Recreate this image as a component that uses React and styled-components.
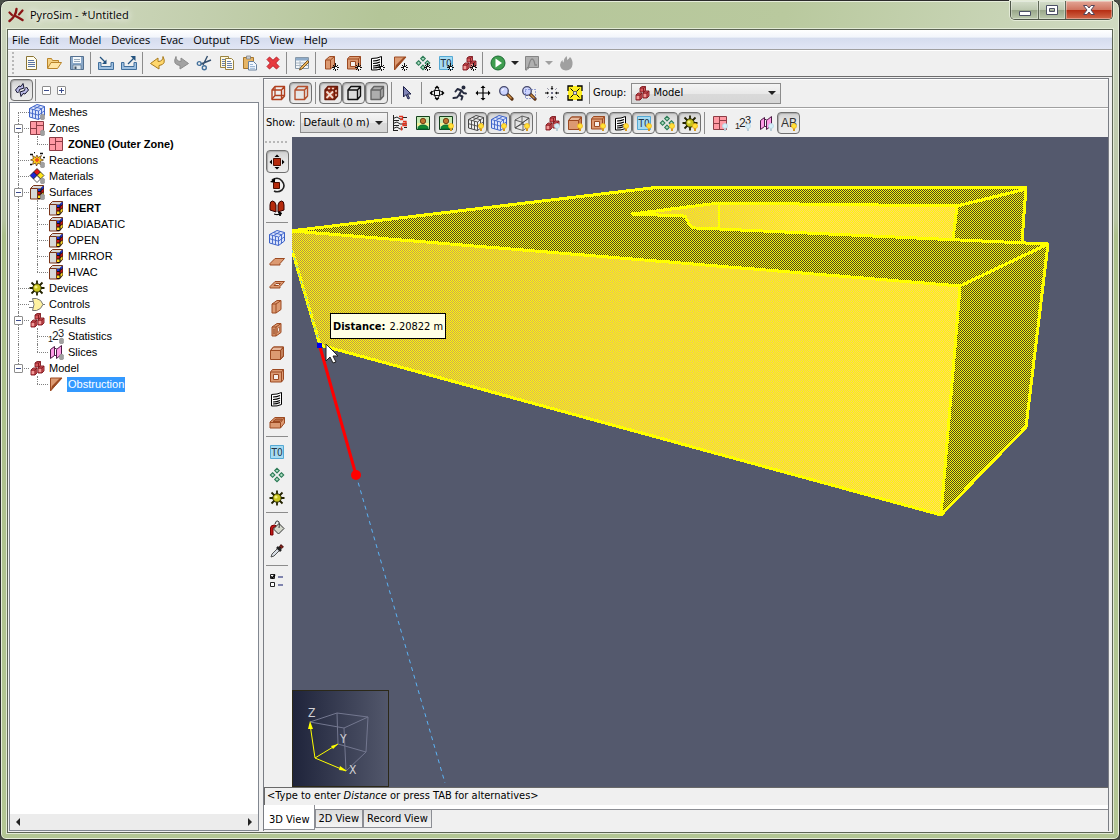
import { useState } from "react"
import styled, { createGlobalStyle } from "styled-components"

const GlobalStyle = createGlobalStyle`
  *, *::before, *::after { box-sizing: border-box; }
  body {
    margin: 0;
    background: #4a4f48;
    color: #000;
    font: 11px/14px "DejaVu Sans Condensed", "DejaVu Sans", sans-serif;
  }
  button, select { font: inherit; color: inherit; }
  ul { list-style: none; margin: 0; padding: 0; }
`

/* ---------- icons ---------- */

const BR = "#9c4a22"
const OR = "#dc9a72"

const Star = () => (
  <g stroke="#111" strokeWidth="1" shapeRendering="crispEdges">
    <path d="M12.500 8v8M8.500 12.500h8" />
    <path d="M10 10l5 5M15 10l-5 5" />
    <path d="M12 12h1v1h-1z" fill="#fff" stroke="#fff" />
  </g>
)

const Bulb = ({ off }) => (
  <g>
    <circle cx="13" cy="11" r="2.500" fill={off ? "#d5eef8" : "#ffe23a"} stroke={off ? "#b5d5e5" : "#f3b51c"} strokeWidth=".8" />
    <path d="M12 13.500h2v2.500h-2z" fill={off ? "#b9cdd8" : "#d99a20"} />
  </g>
)

const Pin = () => <path d="M11.500 11q2-2 4 0v4q-2 2-4 0z" fill="#a0a0a0" stroke="#8a8a8a" strokeWidth=".5" />

const Cube = ({ fill = OR, stroke = BR }) => (
  <g stroke={stroke} strokeLinejoin="round">
    <path d="M1.500 5.500l3-3.500h10v9l-3 3.500h-10z" fill={fill} />
    <path d="M1.500 5.500l3-3.500h10l-3 3.500z" fill="#fff" fillOpacity=".3" />
    <path d="M11.500 5.500l3-3.500v9l-3 3.500z" fill="#5a2000" fillOpacity=".2" />
  </g>
)

const Grid = ({ c = "#3d62c8", fill = "#dbe4fb" }) => (
  <g stroke={c} fill="none">
    <path d="M.500 4.500l7.500-4 7.500 2v8.500l-6 4.500-9-2.500z" fill={fill} />
    <path d="M.500 4.500l9 2.500 6-4.500M9.500 7v8.500M3.500 5.300v8.500M6.500 6.200v8.500M.500 8.700l9 2.500 6-4.500M12.500 5v8.500M4.300 2.500l8.500 2.300M11.500 1.500L4.500 5.600" strokeWidth=".9" />
  </g>
)

const Wire = ({ c = "#444" }) => (
  <path d="M1 5l7-4 7 2v8l-6 4.500L1 13zM1 5l8 2.500L15 3M9 7.500v8M1 13L15 3M8 1v8l7 2M8 9l-7 4" fill="none" stroke={c} strokeWidth=".8" />
)

const Blocks = () => (
  <g fill="#d8585c" stroke="#7d1a20" strokeWidth=".9">
    <path d="M6 3l2-1.500h3.500v4l-2 1.500H6z" />
    <path d="M9 8l2-2h4v5l-2 2H9z" />
    <path d="M2 10l2-2h4v5l-2 2H2z" />
    <path d="M6 3h3.500v4M9.500 3l2-1.500M9 8h4v5M13 8l2-2M2 10h4v5M6 10l2-2" fill="none" />
    <path d="M2.700 11h2.500v3H2.700zM9.700 9h2.500v3H9.700z" fill="#f09a98" stroke="none" />
  </g>
)

const Zone = () => (
  <g stroke="#8d3c45" fill="#ff9aa4">
    <path d="M1.500 1.500h13v13h-13zM1.500 8.500h6M7.500 1.500v13M7.500 5.500h7" />
  </g>
)

const Sheet = () => (
  <g stroke="#000" fill="#fff">
    <path d="M2.500 3.500q6 0 10-2v12q-4 2-10 1.500z" />
    <path d="M4 6q4 0 7-1.500M4 8.500q4 0 7-1.500M4 11q4 0 7-1.500M4 13q4 0 7-1.500" strokeWidth="1.200" fill="none" />
  </g>
)

const Hole = () => (
  <g stroke={BR} fill={OR}>
    <path d="M1.500 4l2-2.500h11v10l-2 2.500h-11z" />
    <path d="M1.500 4h11v10M12.500 4l2-2.500" fill="none" />
    <path d="M4.500 6.500h5v5h-5z" fill="#f5f0ec" />
  </g>
)

const Thermo = () => (
  <g>
    <path d="M1.500 1.500h13v13h-13z" fill="#a6dbf2" stroke="#55a9d4" />
    <text x="8" y="12" fontSize="10" textAnchor="middle" fontFamily="DejaVu Sans Condensed, DejaVu Sans, sans-serif" fill="#234">T0</text>
  </g>
)

const Cluster = () => (
  <g fill="#a9dcbf" stroke="#2c7a56" strokeWidth="1.100">
    <path d="M8 1.300l2.300 2.300L8 5.900 5.700 3.600zM3.600 5.700l2.300 2.300-2.300 2.300L1.300 8zM12.400 5.700l2.300 2.300-2.300 2.300L10.100 8zM8 10.100l2.300 2.300L8 14.700l-2.300-2.300z" />
  </g>
)

const Gear = () => (
  <g stroke="#222200" strokeWidth="1.800">
    <path d="M8 .500v15M.500 8h15M2.500 2.500l11 11M13.500 2.500l-11 11" />
    <circle cx="8" cy="8" r="4.200" fill="#c9c51d" strokeWidth="1" />
    <circle cx="7" cy="7" r="1.600" fill="#f6f27c" stroke="none" />
  </g>
)

const Surface = () => (
  <g>
    <path d="M1.500 4.500l3-3h10v10l-3 3.500h-10z" fill="#d8d8d8" stroke="#7a3418" />
    <path d="M8.500 4.500h3l3-3v10l-3 3.500h-3z" fill="#111" />
    <path d="M9 5h2.500v2H9zM12.500 3.500l2-1.500v2l-2 2z" fill="#1c2fd8" />
    <path d="M9 8h2.500v2.500H9zM12.500 6.500l2-1.500v2.500l-2 2z" fill="#c81414" />
    <path d="M9 11.500h2.500V14H9zM12.500 10l2-1.500v2.500l-2 2z" fill="#ffd820" />
    <path d="M1.500 4.500h7v10.500" fill="none" stroke="#7a3418" />
  </g>
)

const Digits = () => (
  <g fontFamily="Liberation Sans, sans-serif" fill="#222">
    <text x="0" y="14" fontSize="9">1</text>
    <text x="4" y="12" fontSize="12">2</text>
    <text x="10" y="9" fontSize="11">3</text>
  </g>
)

const Slices = () => (
  <g fill="#ff9be6" stroke="#4a1a44">
    <path d="M2.500 5.500l4-3v9l-4 3z" />
    <path d="M8.500 5.500l5-4v9l-5 4z" />
    <path d="M6.500 4.500h2M6.500 11.500h2" />
  </g>
)

const Wedge = () => (
  <g>
    <path d="M2.500 2v13L14 2z" fill={OR} stroke={BR} />
    <path d="M2.500 15L4 10l8-8h2z" fill={BR} />
  </g>
)

const Person = () => (
  <g>
    <path d="M1.500 1.500h13v13h-13z" fill="#c5eab4" stroke="#14401c" />
    <path d="M2 8h12v3H2z" fill="#f0ee9a" />
    <path d="M3 14q0-4 5-4t5 4z" fill="#118a2d" stroke="#063" />
    <circle cx="8" cy="6" r="2.700" fill="#c0722e" stroke="#5a2c08" strokeWidth=".8" />
  </g>
)

const Hydrant = () => (
  <g strokeWidth="1" fill="none">
    <path d="M1.500 0v16" stroke="#222" />
    <path d="M1 3.500l4-1.500 3 2h3M1 8.500l4-1.500 3 2h7M1 13.500l4-1.500 3 2h3M1 5.500h6M1 10.500h6M1 15.500h5M11 2.500h4M12 12.500h3" stroke="#222" />
    <path d="M7 1.500h3.500v3H8M11 6.500h3v2h-3v2h4M9.500 11.500v4" stroke="#e0301c" strokeWidth="1.300" />
  </g>
)

const Magnifier = () => (
  <g>
    <path d="M9 9l5 5" stroke="#5a3212" strokeWidth="3.200" strokeLinecap="round" />
    <path d="M9.500 9.500l4 4" stroke="#d49248" strokeWidth="1.300" />
    <circle cx="6" cy="6" r="4.300" fill="#ccd4ff" stroke="#45486b" strokeWidth="1.300" />
    <path d="M4 6q0-2 2-2" stroke="#fff" fill="none" />
  </g>
)

const Box3 = ({ c, fill }) => (
  <path d="M2 5l3-3.500h9.500V11l-3 3.500H2zM2 5h9.500v9.500M11.500 5l3-3.500" fill={fill || "none"} stroke={c} strokeWidth="1.400" strokeLinejoin="round" />
)

const FourWay = () => (
  <path d="M8 .500L10.500 3h-5zM8 15.500l2.500-2.500h-5zM.500 8L3 5.500v5zM15.500 8L13 5.500v5z" fill="#000" />
)

const icons = {
  doc: <g><path d="M3.500 1.500h7l3 3v10h-10z" fill="#fffdf0" stroke="#8a7434" /><path d="M5 5.500h6M5 7.500h7M5 9.500h7M5 11.500h7" stroke="#5b74a4" /></g>,
  open: <g stroke="#b9842a"><path d="M1.500 13V3.500h4l1 2h6V8" fill="#f4d183" /><path d="M1.500 13.500L5 7.500h10.500l-4 6z" fill="#ffe5a5" /></g>,
  save: <g><path d="M1.500 1.500h13v13h-13z" fill="#8aa8c8" stroke="#55708f" /><path d="M4 2h8v6H4z" fill="#f5f9fc" /><path d="M5 4.500h6M5 6.500h6" stroke="#9ab" /><path d="M4 10h8v4.500H4z" fill="#dfe8ee" stroke="#607c98" strokeWidth=".8" /><path d="M5.500 11.500h2v2.500h-2z" fill="#456" /></g>,
  importIcon: <g><path d="M.500 7.500h2.500v4h10v-4h2.500v7H.500z" fill="#9dbfe0" stroke="#416f9c" /><path d="M2 2l5 5" stroke="#24537f" strokeWidth="1.300" /><path d="M8.500 9V4.500L4 9z" fill="#24537f" /></g>,
  exportIcon: <g><path d="M.500 7.500h2.500v4h10v-4h2.500v7H.500z" fill="#9dbfe0" stroke="#416f9c" /><path d="M7 9l6-6" stroke="#24537f" strokeWidth="1.300" /><path d="M14.500 1v5L9.500 1z" fill="#24537f" /></g>,
  undo: <path d="M13 1.500q4 8-4 9v3.500L.500 8.500 8 3v3.500q5 0 5-5z" fill="#ffd76c" stroke="#a87a1c" />,
  redo: <path d="M3 1.500q-4 8 4 9v3.500l8.500-5.500L8 3v3.500q-5 0-5-5z" fill="#a2a2a2" stroke="#8c8c8c" />,
  cut: <g stroke="#44719c" fill="none" strokeWidth="1.400"><path d="M11.500 1L7 10M15 5L5 9" stroke="#35506e" /><circle cx="3.200" cy="8.500" r="1.900" /><circle cx="8.300" cy="12.800" r="2" /></g>,
  copy: <g stroke="#9a8340"><path d="M1.500 1.500h8v11h-8z" fill="#fff8dc" /><path d="M6.500 3.500h6l2 2v9h-8z" fill="#fffdf3" /><path d="M8 6.500h4M8 8.500h5M8 10.500h5M8 12.500h5M3 4.500h3M3 6.500h3M3 8.500h3M3 10.500h3" stroke="#6a83ac" /></g>,
  paste: <g><path d="M1.500 2.500h10v11h-10z" fill="#e6b566" stroke="#a6762c" /><path d="M4.500 1h4v3h-4z" fill="#c8ced4" stroke="#777" strokeWidth=".7" /><path d="M6.500 6.500h5l3 3v5.500h-8z" fill="#f2f8ff" stroke="#68809c" /><path d="M8 9.500h3M8 11.500h5M8 13.300h5" stroke="#86a6cc" strokeWidth=".8" /></g>,
  del: <path d="M2 4.500L4.500 2 8 5.300 11.500 2 14 4.500 10.700 8 14 11.500 11.500 14 8 10.700 4.500 14 2 11.500 5.300 8z" fill="#e83a3f" stroke="#b8222a" />,
  edit: <g><path d="M1.500 2.500h13v11h-13z" fill="#f2f5f8" stroke="#8798a8" /><path d="M2 3h12v2.500H2z" fill="#8eabc9" /><path d="M2 8h12M2 10.500h12M6 6v7.500" stroke="#abb8c4" /><path d="M13.500 5.500l1.500 1.500-7 7-2.500 1 1-2.500z" fill="#e8b45c" stroke="#6d4b1c" strokeWidth=".9" /></g>,
  newSlab: <g><path d="M2.500 5l4-3.500h5v9l-4 3.500h-5z" fill={OR} stroke={BR} /><path d="M2.500 5h5v9M7.500 5l4-3.500" stroke={BR} fill="none" /><Star /></g>,
  newHole: <g><Hole /><Star /></g>,
  newVent: <g><Sheet /><Star /></g>,
  newWedge: <g><Wedge /><Star /></g>,
  newCluster: <g><Cluster /><Star /></g>,
  newThermo: <g><Thermo /><Star /></g>,
  newBlocks: <g><Blocks /><Star /></g>,
  run: <g><circle cx="8" cy="8" r="7" fill="#3f9e50" stroke="#1d6a34" /><path d="M5.500 3.500L12 8l-6.500 4.500z" fill="#fff" /></g>,
  chart: <g stroke="#858585"><path d="M1.500 1.500h13v11H3v2.500H1.500z" fill="#b0b0b0" /><path d="M4 14q2-10 4-10t3 6h2" fill="none" strokeWidth="1.300" /></g>,
  flame: <path d="M8.500 1q1 2 .500 4 2-1 3-3 3 3 2.500 7.500Q14 15 8 15.500 2.500 15 2 10q0-3 2.500-5 0 2 1 2.500Q6 3 8.500 1z" fill="#a0a0a0" />,
  wireBox: <g><Box3 c="#b0401f" /><path d="M5 2v8.500h9M5 10.500L2 14" stroke="#b0401f" strokeWidth="1.300" fill="none" /></g>,
  outlineBox: <Box3 c="#b5502e" />,
  texBox: <g><Box3 c="#6b1c0c" fill="#a33a22" /><path d="M3.500 6.500l6.500 6.500M10 6.500l-6.500 6.500" stroke="#f2dcd0" strokeWidth="1.800" /><path d="M5 3.500h2M9 3.500h2M13 5v2M13 9v2" stroke="#f2cfc0" strokeWidth="1.400" /></g>,
  blackBox: <Box3 c="#111" fill="#dcdcdc" />,
  greyBox: <Box3 c="#666" fill="#adadad" />,
  arrow: <path d="M4.500 1.500v10.500l2.500-2.500 2 4.500 1.500-.700-2-4.300h3.500z" fill="#8286b8" stroke="#1d2048" />,
  orbit: <g><FourWay /><ellipse cx="8" cy="8" rx="5.500" ry="2.500" fill="none" stroke="#000" /><ellipse cx="8" cy="8" rx="2.500" ry="5.500" fill="none" stroke="#000" /><path d="M6 6h4v4H6z" fill="#f0f0f0" /></g>,
  runner: <g fill="none" stroke="#252a3e" strokeWidth="2" strokeLinecap="round" strokeLinejoin="round"><circle cx="11.500" cy="2.500" r="1" /><path d="M9.500 5.500L7 10l3.500 1.500-1 3M7 10l-2 2.500-3.500.500M9.500 5.500L5.500 4 3.500 6.500M9.500 5.500L11.500 8l2.500.500" /></g>,
  pan: <g><path d="M8 2v12M2 8h12" stroke="#000" strokeWidth="1.200" /><FourWay /></g>,
  zoom: <Magnifier />,
  zoomBox: <g><Magnifier /><path d="M4.500 4.500h10v9h-10z" fill="none" stroke="#3c50b0" strokeDasharray="1 2" /></g>,
  center: <g stroke="#000" fill="none"><path d="M8 1v3M8 12v3M1 8h3M12 8h3M7 3l1 1.500L9 3M7 13l1-1.500L9 13M3 7l1.500 1L3 9M13 7l-1.500 1L13 9" /><path d="M7.500 7.500h1v1h-1z" stroke="#446" /><path d="M3.500 3.500l1 1M12.500 3.500l-1 1M3.500 12.500l1-1M12.500 12.500l-1-1" stroke="#446" /></g>,
  fit: <g><path d="M1 1h14v14H1z" fill="#ffef20" /><path d="M1 6V1h5M10 1h5v5M15 10v5h-5M6 15H1v-5" fill="none" stroke="#000" strokeWidth="1.300" /><path d="M3.500 3.500l3 3M12.500 3.500l-3 3M3.500 12.500l3-3M12.500 12.500l-3-3" stroke="#000" /><path d="M6.500 6.500h3v3h-3z" fill="#d5d5f0" stroke="#335" strokeWidth=".7" /></g>,
  blocks: <Blocks />,
  blocksOff: <g><Blocks /><Bulb off /></g>,
  hydrant: <Hydrant />,
  person: <Person />,
  personOn: <g><Person /><Bulb /></g>,
  gridBlackOn: <g><Grid c="#444" fill="#eee" /><Bulb /></g>,
  gridOn: <g><Grid /><Bulb /></g>,
  wireOn: <g><Wire /><Bulb /></g>,
  cubeOn: <g><Cube /><Bulb /></g>,
  holeOn: <g><Hole /><Bulb /></g>,
  ventOn: <g><Sheet /><Bulb /></g>,
  thermoOn: <g><Thermo /><Bulb /></g>,
  clusterOn: <g><Cluster /><Bulb /></g>,
  gearOn: <g><Gear /><Bulb /></g>,
  zoneOff: <g><Zone /><Bulb off /></g>,
  digitsOff: <g><Digits /><Bulb off /></g>,
  slicesOff: <g><Slices /><Bulb off /></g>,
  label: <g><text x="0" y="12" fontSize="12" fontFamily="Liberation Sans, sans-serif" fill="#333">AB</text><Bulb /></g>,
  move: <g><FourWay /><path d="M4.500 4.500h7v7h-7z" fill="#b52a0c" stroke="#4d0d00" /></g>,
  rotate: <g><path d="M3 3q6-4 10 1t0 9q-4 3-8 1" fill="none" stroke="#222" strokeWidth="1.600" /><path d="M1 5l5-4v5z" fill="#000" /><path d="M4.500 5.500h6v6h-6z" fill="#b52a0c" stroke="#4d0d00" /></g>,
  mirror: <g><path d="M1 5q0-4 2.500-4T7 5v7L1 10zM15 5q0-4-2.500-4T9 5v7l6-2z" fill="#b52a0c" stroke="#300" /><path d="M5 14q3 1.500 6 0M9.500 12l3 1-1.500 3z" stroke="#000" /></g>,
  mesh: <Grid />,
  slab: <path d="M1 10.500l5-5h9.500l-4.500 5v1.500H1z" fill={OR} stroke={BR} />,
  slabHole: <g stroke={BR}><path d="M1 10.500l5-5h9.500l-4.500 5v1.500H1z" fill={OR} /><path d="M5 9.500l2-2h4.500l-2 2z" fill="#f4f0ec" /></g>,
  wall: <g stroke={BR} fill={OR}><path d="M3 5l5-3.500h4v9L7 14H3zM3 5h4v9M7 5l5-3.500" /></g>,
  wallHole: <g stroke={BR} fill={OR}><path d="M3 5l5-3.500h4v9L7 14H3zM3 5h4v9M7 5l5-3.500" /><path d="M8.500 6.500l2-1.500v4l-2 1.500zM4.500 7h1v5h-1z" fill="#f4f0ec" strokeWidth=".7" /></g>,
  block: <Cube />,
  hole: <Hole />,
  vent: <Sheet />,
  room: <g stroke={BR} fill={OR}><path d="M1 8l5-4.500h9.500V9l-4 5H1z" /><path d="M4 7.500l3-2.500h6.500L11 7.500z" fill="#b86f48" /><path d="M1 8.500h10.500V14M11.500 8.500l4-5" fill="none" /></g>,
  thermo: <Thermo />,
  cluster: <Cluster />,
  gear: <Gear />,
  bucket: <g><path d="M1.500 15V8q0-3 4-3l2 1-3.500 2v7z" fill="#c01818" stroke="#700" /><path d="M4.500 9L10 3.500l5 5-5.500 5.500z" fill="#d4d8cc" stroke="#333" /><path d="M6 4q1-4 3-3t1 7" fill="none" stroke="#333" /></g>,
  picker: <g><path d="M2 14l1-3 6-6 2 2-6 6z" fill="#d6dce4" stroke="#444" strokeWidth=".9" /><path d="M8 4l4 4M10 6l3-3.500" stroke="#222" strokeWidth="2.600" /><path d="M12 1.500l2.500 2.500-2 1.500-2-2z" fill="#82231a" stroke="#300" strokeWidth=".7" /></g>,
  options: <g><path d="M1.500 1.500h4v4h-4zM1.500 9.500h4v4h-4z" fill="#fff" stroke="#222" /><path d="M2 3.500L3.500 5 6 1.500" fill="none" stroke="#000" strokeWidth="1.400" /><path d="M9 4h5M9 12h5" stroke="#5a6098" strokeWidth="1.600" /></g>,
  link: <g fill="#bcbce8" stroke="#151530"><path d="M1.500 8L5 4l2 .500L9 1.500l1 4.500-4.500 1.500L5 9.500 3.500 11z" /><path d="M14.500 8L11 12l-2-.500-2 3L6 10l4.500-1.500.500-2L12.500 5z" /></g>,
  treeMesh: <g><Grid /><Pin /></g>,
  treeZone: <g><Zone /><Pin /></g>,
  zone: <Zone />,
  reaction: <g><path d="M8 3l1 2.500 3.500-2-1.500 3 3.500 1.500-3.500 1.500 1.500 3.500-3.500-2L7.500 14l-1-3-3 1.500 1-3.500L1.500 8l3-1.500L3.500 3.500l3 2z" fill="#ffd01c" stroke="#3a1200" strokeWidth=".6" /><path d="M8 5.500l2.500 2.500L8 10.500 5.500 8z" fill="#f0501c" /><path d="M1 2.500h3M11 1.500h3M1 12.500h2M5 .500h1M14 5.500h2" stroke="#111" strokeWidth="1.500" /><Pin /></g>,
  material: <g stroke="#111" strokeWidth=".7"><path d="M8 .500l3.500 3.500L8 7.500 4.500 4z" fill="#e01818" /><path d="M4.500 4L8 7.500 4.500 11 1 7.500z" fill="#1c28d8" /><path d="M11.500 4L15 7.500 11.500 11 8 7.500z" fill="#ffe61c" /><path d="M8 7.500l3.500 3.500L8 14.500 4.500 11z" fill="#fff" /><Pin /></g>,
  treeSurface: <g><Surface /><Pin /></g>,
  surface: <Surface />,
  control: <g stroke="#777"><path d="M0 5.500h4M0 11.500h4M13 8.500h3" /><path d="M3.500 2.500h4q5 1 6.500 6-2 5-6.500 6h-4q3-6 0-12z" fill="#fff2a0" /></g>,
  stats: <g><Digits /><Pin /></g>,
  slices: <g><Slices /><Pin /></g>,
  wedge: <Wedge />,
  logo: <g stroke="#8a1414" fill="none" strokeLinecap="round"><path d="M8.500 2Q8 9 1.500 14" strokeWidth="2.400" /><path d="M7.500 9q3 1.500 7 4" strokeWidth="2.400" /><path d="M1.500 5.500l2.500 2.500" strokeWidth="2.200" /><path d="M14.500 3.500L11 7.500" strokeWidth="2.200" /></g>,
}

const Icon = ({ name, size = 16 }) => (
  <svg width={size} height={size} viewBox="0 0 16 16" aria-hidden="true">{icons[name]}</svg>
)

const Arrow = ({ off }) => (
  <svg width="8" height="4" viewBox="0 0 8 4" aria-hidden="true"><path d="M0 0h8L4 4z" fill={off ? "#a0a0a0" : "#222"} /></svg>
)

/* ---------- window frame ---------- */

const Frame = styled.div`
  display: flex;
  flex-direction: column;
  height: 100vh;
  min-height: 700px;
  padding: 0 6px 6px;
  border: 1px solid #2b2b2b;
  border-radius: 8px 8px 6px 6px;
  box-shadow: inset 0 0 0 1px #e6eddb;
  background:
    linear-gradient(100deg, #d3dbc3 0, #c3cfae 18%, #b4c598 34%, #b9c99e 70%, #d0dac2 100%) 0 0 / 100% 29px no-repeat,
    linear-gradient(#ccd5bf, #b8c4a4 26%, #acc08b 28%, #b3c694);
`

const TitleBar = styled.header`
  display: flex;
  align-items: center;
  flex: none;
  height: 28px;
  gap: 6px;
  padding-left: 1px;
  font: 11px/16px "Open Sans", "Noto Sans", sans-serif;
  h1 {
    flex: 1;
    margin: 0;
    font: inherit;
    text-shadow: 0 0 6px #fff, 0 0 10px #fff;
  }
`

const WindowButtons = styled.div`
  display: flex;
  align-self: flex-start;
  border: 1px solid #4d5548;
  border-top: 0;
  border-radius: 0 0 5px 5px;
  overflow: hidden;
  box-shadow: 0 0 0 1px #e4ebd8;
`

const WindowButton = styled.button`
  display: flex;
  align-items: center;
  justify-content: center;
  width: ${p => (p.$close ? 47 : 27)}px;
  height: 18px;
  padding: 0;
  border: 0;
  border-left: ${p => (p.$first ? 0 : 1)}px solid #5f6857;
  background: ${p => p.$close
    ? "linear-gradient(#e3a797, #d07560 48%, #b52c12 50%, #d2694a)"
    : "linear-gradient(#d5decb, #bdc9b0 48%, #98a689 50%, #bccaad)"};
  box-shadow: inset 0 0 0 1px rgba(255, 255, 255, 0.35);
`

const Client = styled.div`
  display: flex;
  flex-direction: column;
  flex: 1;
  min-height: 0;
  border: 1px solid #5c6455;
  outline: 1px solid #e2ead6;
  background: #f0f0f0;
`

const MenuBar = styled.nav`
  display: flex;
  flex: none;
  height: 20px;
  padding-left: 4px;
  gap: 10px;
  border-bottom: 1px solid #a0a0a0;
  background: linear-gradient(#fff, #f2f5fb 38%, #d5dcee 42%, #e1e6f5);
  button {
    padding: 0;
    border: 0;
    background: none;
    font: 11px/18px "Open Sans", "Noto Sans", sans-serif;
  }
`

/* ---------- toolbars ---------- */

const Bar = styled.div`
  display: flex;
  align-items: center;
  flex: none;
  height: ${p => p.$height}px;
  padding-left: ${p => p.$indent || 0}px;
  border-bottom: ${p => p.$line ? `1px solid ${p.$line}` : 0};
  box-shadow: inset 0 1px #fff;
`

const Grip = styled.span`
  flex: none;
  margin: ${p => (p.$flat ? "0 0 7px" : "0 5px 0 0")};
  width: ${p => (p.$flat ? 24 : 2)}px;
  height: ${p => (p.$flat ? 2 : 22)}px;
  background: ${p => p.$flat
    ? "repeating-linear-gradient(90deg, #b8b8b8 0 2px, transparent 2px 4px)"
    : "repeating-linear-gradient(#b8b8b8 0 2px, transparent 2px 4px)"};
`

const Tool = styled.button`
  display: flex;
  align-items: center;
  justify-content: center;
  flex: none;
  width: 23px;
  height: ${p => (p.$tall ? 23 : 22)}px;
  padding: 0;
  border: 1px solid transparent;
  border-radius: 4px;
  background: none;
  &[aria-pressed="true"] {
    border-color: #707070;
    background: linear-gradient(#cfcfcf, #e4e4e4 40%, #ececec);
    box-shadow: inset 1px 1px 1px #aaa;
  }
`

const DropTool = styled(Tool)`
  width: 11px;
`

const Rule = styled.span`
  flex: none;
  width: ${p => (p.$flat ? "22px" : "1px")};
  height: ${p => (p.$flat ? "1px" : "22px")};
  margin: ${p => (p.$flat ? "3px 0" : p.$tight ? "0 3px 0 2px" : "0 3px")};
  background: #8c8c8c;
`

const FieldLabel = styled.label`
  padding-right: 5px;
`

const Picker = styled.span`
  position: relative;
  display: flex;
  flex: none;
  width: ${p => p.$width}px;
  select {
    width: 100%;
    height: 21px;
    padding: 0 18px 0 ${p => (p.$icon ? 21 : 2)}px;
    border: 1px solid #8c8c8c;
    border-radius: 0;
    outline: 0;
    appearance: none;
    background: linear-gradient(#f4f4f4, #e9e9e9 50%, #dadada 52%, #d6d6d6);
  }
  > svg {
    position: absolute;
    top: 50%;
    right: 5px;
    transform: translateY(-50%);
    pointer-events: none;
  }
  > svg:nth-of-type(2) {
    right: auto;
    left: 3px;
  }
`

const ToolButton = ({ name, on, tall }) => {
  const [pressed, setPressed] = useState(on)
  return (
    <Tool
      type="button"
      aria-label={name}
      aria-pressed={on === undefined ? undefined : pressed}
      $tall={tall}
      onClick={() => on !== undefined && setPressed(!pressed)}
    >
      <Icon name={name} />
    </Tool>
  )
}

// "|" draws a separator, a leading "+" marks a pressed button
const ToolSet = ({ items, flat, tight }) => items.split(" ").map((item, i) => {
  if (item === "|") return <Rule key={i} $flat={flat} $tight={tight} />
  const on = item[0] === "+"
  return <ToolButton key={i} name={on ? item.slice(1) : item} on={on ? true : undefined} tall={flat} />
})

/* ---------- tree ---------- */

const Body = styled.div`
  display: flex;
  flex: 1;
  min-height: 0;
  gap: 4px;
  padding: 1px 3px 1px 1px;
`

const SidePane = styled.aside`
  display: flex;
  flex-direction: column;
  flex: none;
  width: 250px;
`

const Fold = styled.button`
  display: flex;
  align-items: center;
  justify-content: center;
  flex: none;
  width: 9px;
  height: 9px;
  padding: 0;
  border: 1px solid #8d8d8d;
  border-radius: 1px;
  background: #fff;
`

const FoldAll = styled.span`
  display: flex;
  gap: 6px;
  padding-left: 3px;
`

const TreeBox = styled.div`
  display: flex;
  flex-direction: column;
  flex: 1;
  border: 1px solid #828790;
  background: #fff;
  font: 11px/15px "Liberation Sans", Arial, sans-serif;
  > ul { flex: 1; padding-top: 1px; }
`

const TreeRow = styled.li`
  display: flex;
  align-items: center;
  height: 16px;
  > svg { flex: none; margin-right: 3px; }
`

const Guide = styled.span`
  position: relative;
  flex: none;
  align-self: stretch;
  display: flex;
  align-items: center;
  width: 19px;
  padding-left: 4px;
  &::before {
    content: "";
    position: absolute;
    left: 8px;
    top: ${p => (p.$kind === "first" ? "8px" : 0)};
    bottom: ${p => (p.$kind === "last" ? "8px" : 0)};
    border-left: ${p => (p.$kind === "none" ? 0 : "1px dotted #808080")};
  }
  &::after {
    content: "";
    position: absolute;
    left: 8px;
    right: 0;
    top: 8px;
    border-top: ${p => (p.$kind === "none" || p.$kind === "line" ? 0 : "1px dotted #808080")};
  }
  ${Fold} { z-index: 1; }
`

const NodeLabel = styled.span`
  padding: 0 1px;
  font-weight: ${p => (p.$bold ? "bold" : "normal")};
  color: ${p => (p.$selected ? "#fff" : "#000")};
  background: ${p => (p.$selected ? "#3399ff" : "none")};
`

const ScrollBar = styled.div`
  display: flex;
  justify-content: space-between;
  height: 16px;
  padding: 0 4px;
  background: #ececec;
  button {
    display: flex;
    align-items: center;
    padding: 0 2px;
    border: 0;
    background: none;
  }
`

const treeRows = [
  { icon: "treeMesh", label: "Meshes", kind: "first" },
  { icon: "treeZone", label: "Zones", fold: true },
  { icon: "zone", label: "ZONE0 (Outer Zone)", deep: true, bold: true, last: true },
  { icon: "reaction", label: "Reactions" },
  { icon: "material", label: "Materials" },
  { icon: "treeSurface", label: "Surfaces", fold: true },
  { icon: "surface", label: "INERT", deep: true, bold: true },
  { icon: "surface", label: "ADIABATIC", deep: true },
  { icon: "surface", label: "OPEN", deep: true },
  { icon: "surface", label: "MIRROR", deep: true },
  { icon: "surface", label: "HVAC", deep: true, last: true },
  { icon: "gear", label: "Devices" },
  { icon: "control", label: "Controls" },
  { icon: "blocks", label: "Results", fold: true },
  { icon: "stats", label: "Statistics", deep: true },
  { icon: "slices", label: "Slices", deep: true, last: true },
  { icon: "blocks", label: "Model", fold: true, kind: "last" },
  { icon: "wedge", label: "Obstruction", deep: true, last: true, selected: true, noTrunk: true },
]

const Sign = ({ plus }) => (
  <svg width="5" height="5" viewBox="0 0 5 5" aria-hidden="true">
    <path d={plus ? "M0 2.500h5M2.500 0v5" : "M0 2.500h5"} stroke="#3a4a8c" />
  </svg>
)

/* ---------- 3D view ---------- */

const MainPane = styled.main`
  display: flex;
  flex-direction: column;
  flex: 1;
  min-width: 0;
  border: 1px solid #7a7d84;
  border-bottom: 0;
`

const Work = styled.div`
  display: flex;
  flex: 1;
  min-height: 0;
`

const SideTools = styled.div`
  display: flex;
  flex-direction: column;
  align-items: center;
  flex: none;
  width: 28px;
  padding: 4px 2px 0 0;
`

const Canvas = styled.div`
  position: relative;
  flex: 1;
  min-width: 0;
  overflow: hidden;
  background: #54596d;
  > svg { display: block; width: 100%; height: 100%; }
`

const Tip = styled.div`
  position: absolute;
  left: 38px;
  top: 176px;
  padding: 5px 2px 4px;
  border: 1px solid #000;
  background: #ffffe5;
  font: 11px/15px "DejaVu Sans Condensed", "DejaVu Sans", sans-serif;
  white-space: nowrap;
  span { margin-left: 4px; }
`

const AxisBox = styled.div`
  position: absolute;
  left: 0;
  bottom: 0;
  width: 97px;
  height: 97px;
  border: 1px solid #2b2818;
  background: linear-gradient(90deg, #1f243b, #52576b);
  svg { display: block; }
`

const Prompt = styled.div`
  flex: none;
  height: 18px;
  padding: 1px 0 0 2px;
  border-top: 1px solid #696969;
  border-left: 1px solid #696969;
  background: #f0f0f0;
`

const Tabs = styled.div`
  display: flex;
  align-items: flex-start;
  flex: none;
  height: 26px;
  background: linear-gradient(#fff 0 4px, #8c8e94 4px 5px, #f0f0f0 5px);
`

const Tab = styled.button`
  height: ${p => (p.$active ? 25 : 19)}px;
  margin-top: ${p => (p.$active ? 0 : 4)}px;
  padding: ${p => (p.$active ? "6px 4px 0 5px" : "0 3px")};
  border: 1px solid #8c8e94;
  border-top-width: ${p => (p.$active ? 0 : 1)}px;
  border-left-width: ${p => (p.$active ? 0 : 1)}px;
  background: ${p => (p.$active ? "#fff" : "linear-gradient(#dcdcdc, #f4f4f4)")};
`

// one-pixel checkerboard laid over the selected faces
const Check = ({ id, color }) => (
  <pattern id={id} width="2" height="2" patternUnits="userSpaceOnUse">
    <path d="M1 0h1v1H1zM0 1h1v1H0z" fill={color} shapeRendering="crispEdges" />
  </pattern>
)

const Scene = () => (
  <svg aria-label="Obstruction">
    <defs>
      <linearGradient id="front" gradientUnits="userSpaceOnUse" x1="292" y1="300" x2="960" y2="400">
        <stop offset="0" stopColor="#b08a50" />
        <stop offset=".5" stopColor="#e6b86c" />
        <stop offset="1" stopColor="#ffd270" />
      </linearGradient>
      <linearGradient id="inner" gradientUnits="userSpaceOnUse" x1="640" y1="0" x2="800" y2="0">
        <stop offset="0" stopColor="#d8a862" />
        <stop offset=".5" stopColor="#eabc6c" />
        <stop offset="1" stopColor="#ffd074" />
      </linearGradient>
      <Check id="dots" color="#ffff00" />
    </defs>
    <g transform="translate(-292 -137)" strokeLinejoin="round">
      <g shapeRendering="crispEdges">
        <path d="M292 231L660 186h366l-4 56 26 2-22 183-85 88 19-229-668-55z" fill="#483c28" />
        <path d="M292 231l668 55-19 229-621-170-28-95z" fill="url(#front)" />
        <path d="M632 214l87-12 238 3-3 35-262-12-9-12z" fill="url(#inner)" />
        <path d="M292 231L660 186h366l-4 56 26 2-22 183-85 88-621-170-28-95z" fill="url(#dots)" />
        <g fill="none" stroke="#ffff00" strokeWidth="3">
          <path d="M290 231L660 187h366l-4 55" />
          <path d="M1026 189l-69 17-238-3-87 11 51 2q3 0 5 6 3 6 8 6l23 1 329 15-88 42-668-55" />
          <path d="M957 206l-4 34" />
          <path d="M1048 244l-22 183-85 88 19-228" />
          <path d="M941 515L320 345l-28-95" />
        </g>
        <path d="M719 203v26" stroke="#ffff00" strokeWidth="2" />
      </g>
      <path d="M292 250l28 95" stroke="#67b9ef" strokeDasharray="3 5" />
      <path d="M356 475l89 308" stroke="#5bb2f4" strokeDasharray="4 4" />
      <path d="M320 347l36 128" stroke="#ff0000" strokeWidth="3" />
      <circle cx="356" cy="475" r="5" fill="#ff0000" />
      <path d="M317 343h5v5h-5z" fill="#0000e8" />
      <path d="M326 344v17l4-4 3 6 3-1-3-6h5z" fill="#fff" stroke="#222" />
    </g>
  </svg>
)

const Axes = () => (
  <svg width="95" height="95" aria-label="Axes">
    <g transform="translate(-293 -691)" fill="none">
      <path d="M310 722l27-9 31 4-24 11zM337 713l1 31 28 8 2-35M344 728l2 43 20-19" stroke="#73778f" />
      <path d="M310 724l5 34 23-14M315 758l31 13" stroke="#ffff00" />
      <path d="M308 729l2-8 3 8zM338 744l-7 2 2 3zM347 771l-7-5-1 4z" fill="#ffff00" />
      <g fill="#d0d0d4" fontSize="12" fontFamily="DejaVu Sans Condensed, DejaVu Sans, sans-serif">
        <text x="308" y="717">Z</text>
        <text x="340" y="743">Y</text>
        <text x="349" y="774">X</text>
      </g>
    </g>
  </svg>
)

const App = () => {
  const [tab, setTab] = useState("3D View")

  return <Frame>
    <GlobalStyle />
    <TitleBar>
      <Icon name="logo" />
      <h1>PyroSim - *Untitled</h1>
      <WindowButtons>
        <WindowButton type="button" aria-label="Minimize" $first>
          <svg width="12" height="12"><path d="M.500 7.500h11v4H.500z" fill="#fff" stroke="#4b5064" /></svg>
        </WindowButton>
        <WindowButton type="button" aria-label="Maximize">
          <svg width="12" height="11"><path d="M.500 .500h11v9H.500zM3.500 3.500h5v3h-5z" fill="#fff" fillRule="evenodd" stroke="#4b5064" /></svg>
        </WindowButton>
        <WindowButton type="button" aria-label="Close" $close>
          <svg width="12" height="10"><path d="M.500 .500h3.500l2 2.500 2-2.500h3.500L8 5l3.500 4.500H8L6 7 4 9.500H.500L4 5z" fill="#fff" stroke="#52465a" /></svg>
        </WindowButton>
      </WindowButtons>
    </TitleBar>

    <Client>
      <MenuBar>
        {["File", "Edit", "Model", "Devices", "Evac", "Output", "FDS", "View", "Help"].map(name => (
          <button type="button" key={name}>{name}</button>
        ))}
      </MenuBar>

      <Bar $height={27} $indent={4} $line="#6d6d6d">
        <Grip />
        <ToolSet tight items="doc open save | importIcon exportIcon | undo redo cut copy paste del | edit | newSlab newHole newVent newWedge newCluster newThermo newBlocks | run" />
        <DropTool type="button" aria-label="Run options"><Arrow /></DropTool>
        <ToolSet items="chart" />
        <DropTool type="button" aria-label="Chart options"><Arrow off /></DropTool>
        <ToolSet items="flame" />
      </Bar>

      <Body>
        <SidePane>
          <Bar $height={24} $indent={1}>
            <ToolSet tight items="+link |" />
            <FoldAll>
              <Fold type="button" aria-label="Collapse all"><Sign /></Fold>
              <Fold type="button" aria-label="Expand all"><Sign plus /></Fold>
            </FoldAll>
          </Bar>
          <TreeBox>
            <ul>
              {treeRows.map(row => (
                <TreeRow key={row.label}>
                  {row.deep
                    ? <><Guide $kind={row.noTrunk ? "none" : "line"} /><Guide $kind={row.last ? "last" : "mid"} /></>
                    : (
                      <Guide $kind={row.kind || "mid"}>
                        {row.fold && <Fold type="button" aria-label={`Collapse ${row.label}`}><Sign /></Fold>}
                      </Guide>
                    )}
                  <Icon name={row.icon} />
                  <NodeLabel $bold={row.bold} $selected={row.selected}>{row.label}</NodeLabel>
                </TreeRow>
              ))}
            </ul>
            <ScrollBar>
              <button type="button" aria-label="Scroll left"><svg width="4" height="8"><path d="M4 0v8L0 4z" fill="#222" /></svg></button>
              <button type="button" aria-label="Scroll right"><svg width="4" height="8"><path d="M0 0v8l4-4z" fill="#222" /></svg></button>
            </ScrollBar>
          </TreeBox>
        </SidePane>

        <MainPane>
          <Bar $height={29} $indent={2} $line="#a0a0a0">
            <ToolSet items="wireBox +outlineBox | +texBox +blackBox +greyBox | arrow | orbit runner pan zoom zoomBox center fit |" />
            <FieldLabel htmlFor="group">Group:</FieldLabel>
            <Picker $width={150} $icon>
              <select id="group"><option>Model</option></select>
              <Arrow />
              <Icon name="blocks" />
            </Picker>
          </Bar>
          <Bar $height={29} $indent={2}>
            <FieldLabel htmlFor="show">Show:</FieldLabel>
            <Picker $width={88}>
              <select id="show"><option>Default (0 m)</option></select>
              <Arrow />
            </Picker>
            <ToolSet items="hydrant person +personOn | +gridBlackOn +gridOn +wireOn | blocksOff +cubeOn +holeOn +ventOn +thermoOn +clusterOn +gearOn | zoneOff digitsOff slicesOff +label" />
          </Bar>
          <Work>
            <SideTools>
              <Grip $flat />
              <ToolSet flat items="+move rotate mirror | mesh slab slabHole wall wallHole block hole vent room | thermo cluster gear | bucket picker | options" />
            </SideTools>
            <Canvas>
              <Scene />
              <Tip role="tooltip"><b>Distance:</b><span>2.20822 m</span></Tip>
              <AxisBox><Axes /></AxisBox>
            </Canvas>
          </Work>
          <Prompt>&lt;Type to enter <i>Distance</i> or press TAB for alternatives&gt;</Prompt>
          <Tabs role="tablist">
            {["3D View", "2D View", "Record View"].map(name => (
              <Tab type="button" role="tab" key={name} aria-selected={tab === name} $active={tab === name} onClick={() => setTab(name)}>
                {name}
              </Tab>
            ))}
          </Tabs>
        </MainPane>
      </Body>
    </Client>
  </Frame>
}

export default App
